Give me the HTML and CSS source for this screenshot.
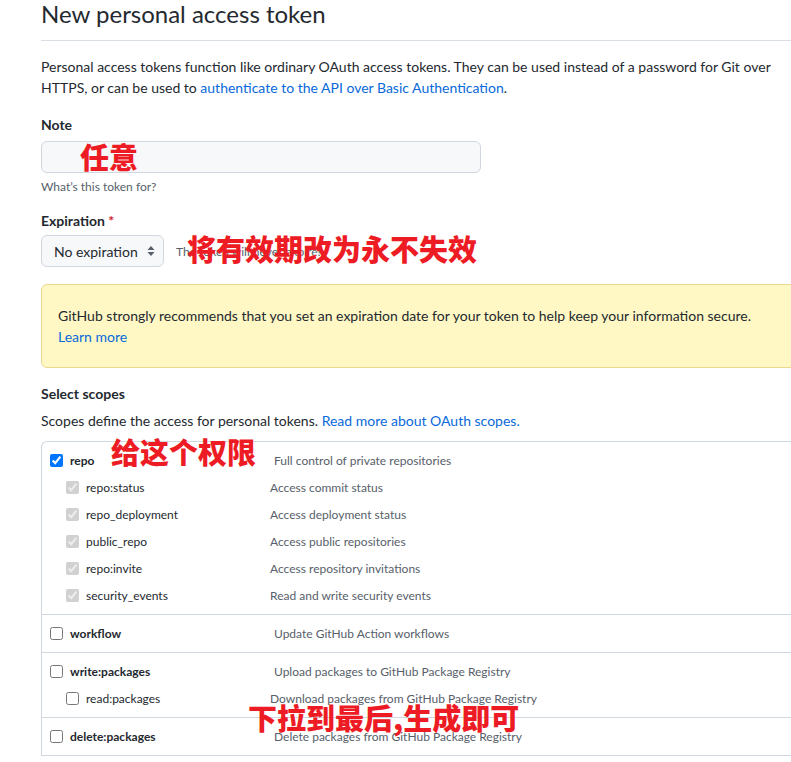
FILE: index.html
```html
<!DOCTYPE html>
<html lang="en">
<head>
<meta charset="utf-8">
<title>New personal access token</title>
<link rel="stylesheet" href="styles.css">
</head>
<body>
<div class="page">
  <div class="subhead">
    <h2 class="subhead-title">New personal access token</h2>
  </div>
  <p class="intro">Personal access tokens function like ordinary OAuth access tokens. They can be used instead of a password for Git over HTTPS, or can be used to <a href="#">authenticate to the API over Basic Authentication</a>.</p>

  <div class="field">
    <div class="label">Note</div>
    <div class="input"></div>
    <div class="note">What’s this token for?</div>
  </div>

  <div class="field field-exp">
    <div class="label">Expiration <span class="req">*</span></div>
    <div class="exp-row">
      <div class="select">No expiration
        <svg class="updown" width="8" height="12" viewBox="0 0 8 12"><path d="M4 1 L7.5 5 H0.5 Z M4 11 L0.5 7 H7.5 Z" fill="#57606a"/></svg>
      </div>
      <span class="exp-hint">The token will never expire!</span>
    </div>
  </div>

  <div class="flash">GitHub strongly recommends that you set an expiration date for your token to help keep your information secure.<br><a href="#">Learn more</a></div>

  <div class="label scopes-label">Select scopes</div>
  <p class="scopes-desc">Scopes define the access for personal tokens. <a href="#">Read more about OAuth scopes.</a></p>

  <div class="scopes">
    <div class="group">
      <div class="row top"><label class="name"><input type="checkbox" checked><b>repo</b></label><span class="desc">Full control of private repositories</span></div>
      <div class="row sub"><label class="name"><input type="checkbox" checked disabled>repo:status</label><span class="desc">Access commit status</span></div>
      <div class="row sub"><label class="name"><input type="checkbox" checked disabled>repo_deployment</label><span class="desc">Access deployment status</span></div>
      <div class="row sub"><label class="name"><input type="checkbox" checked disabled>public_repo</label><span class="desc">Access public repositories</span></div>
      <div class="row sub"><label class="name"><input type="checkbox" checked disabled>repo:invite</label><span class="desc">Access repository invitations</span></div>
      <div class="row sub"><label class="name"><input type="checkbox" checked disabled>security_events</label><span class="desc">Read and write security events</span></div>
    </div>
    <div class="group">
      <div class="row top"><label class="name"><input type="checkbox"><b>workflow</b></label><span class="desc">Update GitHub Action workflows</span></div>
    </div>
    <div class="group">
      <div class="row top"><label class="name"><input type="checkbox"><b>write:packages</b></label><span class="desc">Upload packages to GitHub Package Registry</span></div>
      <div class="row sub"><label class="name"><input type="checkbox">read:packages</label><span class="desc">Download packages from GitHub Package Registry</span></div>
    </div>
    <div class="group">
      <div class="row top"><label class="name"><input type="checkbox"><b>delete:packages</b></label><span class="desc">Delete packages from GitHub Package Registry</span></div>
    </div>
  </div>

  <div class="anno a1">任意</div>
  <div class="anno a2">将有效期改为永不失效</div>
  <div class="anno a3">给这个权限</div>
  <div class="anno a4">下拉到最后,生成即可</div>
</div>
</body>
</html>
```
FILE: styles.css
```css
html, body {
  margin: 0;
  padding: 0;
  background: #ffffff;
  overflow: hidden;
}
body {
  font-family: "Lato", "Noto Sans", sans-serif;
  color: #24292f;
  font-size: 14px;
}
a {
  color: #0969da;
  text-decoration: none;
}
.page {
  position: relative;
  width: 1000px;
  padding-left: 41px;
}
.subhead {
  border-bottom: 1px solid #d8dee4;
  padding-bottom: 9px;
}
.subhead-title {
  margin: 0;
  font-size: 24px;
  font-weight: 400;
  line-height: 34px;
  margin-top: -3px;
}
.intro {
  margin: 15px 0 0 0;
  line-height: 21px;
  width: 760px;
}
.field {
  margin-top: 17px;
}
.field-exp {
  margin-top: 15px;
}
.label {
  font-weight: 700;
  line-height: 20px;
}
.req {
  color: #cf222e;
}
.input {
  margin-top: 6px;
  width: 438px;
  height: 30px;
  background: #f6f8fa;
  border: 1px solid #d0d7de;
  border-radius: 6px;
}
.note {
  margin-top: 5px;
  font-size: 12px;
  color: #57606a;
  line-height: 18px;
}
.exp-row {
  margin-top: 4px;
  display: flex;
  align-items: center;
}
.select {
  display: flex;
  align-items: center;
  box-sizing: border-box;
  width: 123px;
  height: 32px;
  padding-left: 12px;
  border: 1px solid #d0d7de;
  border-radius: 6px;
  background: #f6f8fa;
  font-size: 14px;
}
.updown {
  margin-left: auto;
  margin-right: 8px;
}
.exp-hint {
  margin-left: 12px;
  font-size: 12px;
  color: #57606a;
}
.flash {
  margin-top: 17px;
  padding: 20px 16px;
  line-height: 21px;
  background: #fff8c5;
  border: 1px solid #ecd88f;
  border-radius: 6px;
}
.scopes-label {
  margin-top: 16px;
}
.scopes-desc {
  margin: 6px 0 0 0;
  line-height: 21px;
}
.scopes {
  margin-top: 10px;
  border: 1px solid #d0d7de;
  border-bottom: none;
  border-radius: 6px 0 0 0;
}
.group {
  padding: 5px 0;
  border-bottom: 1px solid #d0d7de;
}
.row {
  display: flex;
  align-items: center;
  height: 27px;
  font-size: 12px;
}
.name {
  display: flex;
  align-items: center;
  color: #24292f;
}
.name input {
  margin: 0 7px 0 0;
  width: 13px;
  height: 13px;
}
.name b {
  font-weight: 700;
}
.row.top .name {
  width: 224px;
  padding-left: 8px;
}
.row.sub .name {
  width: 204px;
  padding-left: 24px;
}
.desc {
  color: #57606a;
}
.anno {
  position: absolute;
  font-family: "Noto Sans CJK SC", sans-serif;
  font-weight: 900;
  font-size: 29px;
  line-height: 1;
  color: #ed1c24;
  white-space: nowrap;
}
.a1 { left: 80px; top: 145px; }
.a2 { left: 187px; top: 237px; }
.a3 { left: 111px; top: 440px; }
.a4 { left: 248px; top: 706px; }
```
